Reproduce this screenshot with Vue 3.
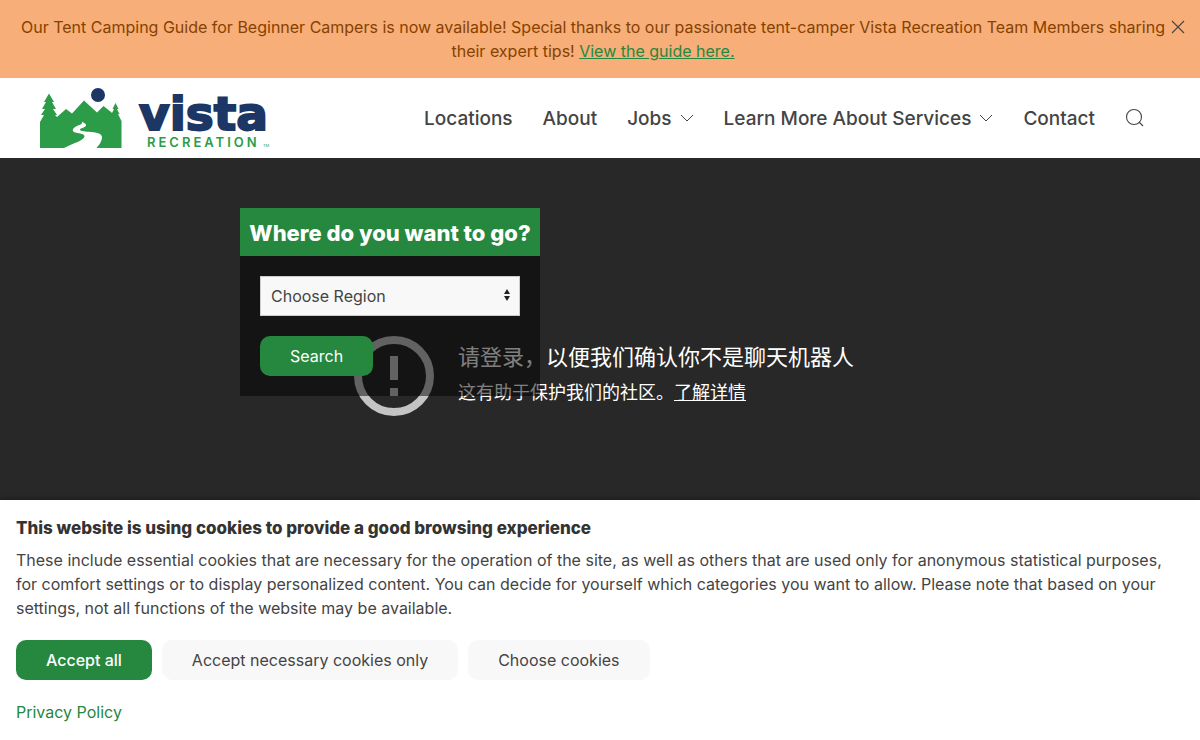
<script setup>
import { ref } from 'vue'

const bannerOpen = ref(true)
const region = ref('')
const links = [
  { label: 'Locations' },
  { label: 'About' },
  { label: 'Jobs', menu: true },
  { label: 'Learn More About Services', menu: true },
  { label: 'Contact' }
]
</script>

<template>
  <div class="page">
    <aside v-if="bannerOpen" class="banner">
      <p>
        Our Tent Camping Guide for Beginner Campers is now available! Special thanks to our passionate tent-camper Vista
        Recreation Team Members sharing their expert tips! <a href="#guide">View the guide here.</a>
      </p>
      <button type="button" class="close" aria-label="Close" @click="bannerOpen = false">
        <svg width="14" height="14" viewBox="0 0 14 14" fill="none" stroke="currentColor" stroke-width="1.1">
          <path d="M1 1 13 13M13 1 1 13" />
        </svg>
      </button>
    </aside>

    <header class="header">
      <a class="logo" href="#home" aria-label="Vista Recreation">
        <svg width="232" height="64" viewBox="0 0 232 64">
          <path
            fill="#2c9c48"
            d="M0 62V36L4 29H1L5 23H2L6 16H4L9 7.500 14 16H12L16 23H13L17 29H15L17 31 26 23 32 27.500 44 14.500 57 26.500 63.500 20 71 26 73 28H71.500L74 23H72.500L74 20 75.500 17 77 20 78.500 23H77L79.500 28H78L81.500 35V62Z"
          />
          <path
            fill="#fff"
            d="M42 35C42.500 37 42 38 39.500 39 35 40.500 32 43 33 45 34.500 48 44 46.500 44.500 50 45 54 34 57 24 62H56.500C59 59 61.500 56 62 52 62.500 47.500 57 46.500 51 46 46 45.500 40 45.500 40 43.500 40 42 46 42 46 39 46 37 42.500 37 42 35Z"
          />
          <circle cx="58" cy="9" r="7" fill="#1c3766" />
          <text class="wordmark" x="99" y="44">vista</text>
          <text class="tagline" x="107" y="61">RECREATION</text>
          <text class="trade" x="223" y="61">TM</text>
        </svg>
      </a>
      <nav class="nav" aria-label="Main">
        <a v-for="link in links" :key="link.label" href="#nav">
          {{ link.label }}
          <svg v-if="link.menu" width="14" height="14" viewBox="0 0 14 14" fill="none" stroke="currentColor">
            <path d="M1 3 7 9 13 3" />
          </svg>
        </a>
        <button type="button" class="search-toggle" aria-label="Open search">
          <svg width="20" height="20" viewBox="0 0 20 20" fill="none" stroke="currentColor" stroke-width="1.1">
            <circle cx="9" cy="9" r="7.500" />
            <path d="M14 14 18 18" />
          </svg>
        </button>
      </nav>
    </header>

    <main class="hero">
      <section class="notice">
        <svg width="80" height="80" viewBox="0 0 80 80">
          <circle cx="40" cy="40" r="36" fill="none" stroke="#c4c4c4" stroke-width="8" />
          <path fill="#c4c4c4" d="M36 20h8v24h-8zM36 52h8v8h-8z" />
        </svg>
        <div>
          <h2>请登录，以便我们确认你不是聊天机器人</h2>
          <p>这有助于保护我们的社区。<a href="#more">了解详情</a></p>
        </div>
      </section>
      <form class="finder" @submit.prevent>
        <h1>Where do you want to go?</h1>
        <div class="fields">
          <div class="select">
            <select v-model="region" aria-label="Region">
              <option value="">Choose Region</option>
            </select>
            <svg width="8" height="12" viewBox="0 0 8 12" fill="#222">
              <path d="M4 0 7 5H1zM1 7h6L4 12z" />
            </svg>
          </div>
          <button type="submit" class="btn primary">Search</button>
        </div>
      </form>
    </main>

    <section class="cookies" aria-label="Cookies">
      <h2>This website is using cookies to provide a good browsing experience</h2>
      <p>
        These include essential cookies that are necessary for the operation of the site, as well as others that are
        used only for anonymous statistical purposes, for comfort settings or to display personalized content. You can
        decide for yourself which categories you want to allow. Please note that based on your settings, not all
        functions of the website may be available.
      </p>
      <div class="actions">
        <button type="button" class="btn primary strong">Accept all</button>
        <button type="button" class="btn">Accept necessary cookies only</button>
        <button type="button" class="btn">Choose cookies</button>
      </div>
      <a href="#privacy">Privacy Policy</a>
    </section>
  </div>
</template>

<style>
body {
  margin: 0;
}
</style>

<style scoped>
* {
  box-sizing: border-box;
}
.page {
  display: flex;
  flex-direction: column;
  min-height: 100vh;
  background: #282828;
  color: #444;
  font: 16px/24px Inter, sans-serif;
}
h1,
h2,
p {
  margin: 0;
}
button {
  border: 0;
  cursor: pointer;
  font: inherit;
}
svg {
  display: block;
  flex: none;
}
.banner {
  display: flex;
  align-items: flex-start;
  padding: 15px;
  background: #f7ae78;
  color: #864200;
  text-align: center;
}
.banner p {
  flex: 1;
}
.banner a {
  color: #26873f;
}
.close {
  margin-top: 5px;
  padding: 0;
  background: none;
  color: #444;
}
.header {
  display: flex;
  align-items: center;
  justify-content: space-between;
  height: 80px;
  padding: 0 55px 0 40px;
  background: #fff;
}
.wordmark {
  fill: #1c3766;
  stroke: #1c3766;
  stroke-width: 2px;
  font: 700 47px "DejaVu Sans", sans-serif;
}
.tagline {
  fill: #2c9c48;
  font: 600 13px Inter, sans-serif;
  letter-spacing: 3px;
}
.trade {
  fill: #2c9c48;
  font: 4px Inter, sans-serif;
}
.nav {
  display: flex;
  align-items: center;
  gap: 30px;
  font-size: 19px;
  font-weight: 500;
}
.nav a {
  display: flex;
  align-items: center;
  gap: 8px;
  padding-top: 2px;
  color: #444;
  text-decoration: none;
  white-space: nowrap;
}
.search-toggle {
  padding: 0;
  background: none;
  color: #444;
}
.hero {
  display: grid;
  flex: 1;
  align-items: start;
}
.notice,
.finder {
  grid-area: 1 / 1;
}
.notice {
  display: flex;
  gap: 24px;
  justify-self: center;
  margin: 178px 0 0 8px;
  color: #fff;
  font-family: "Noto Sans CJK SC", sans-serif;
  white-space: nowrap;
}
.notice h2 {
  font-size: 22px;
  font-weight: 400;
  line-height: 38px;
}
.notice p {
  font-size: 18px;
  line-height: 34px;
}
.notice a {
  color: inherit;
}
.finder {
  width: 300px;
  margin: 50px 0 0 20%;
  background: rgba(0, 0, 0, 0.5);
}
.finder h1 {
  padding-top: 2px;
  background: #26873f;
  color: #fff;
  font-size: 22px;
  font-weight: 800;
  line-height: 46px;
  text-align: center;
  white-space: nowrap;
}
.fields {
  display: flex;
  flex-direction: column;
  align-items: flex-start;
  gap: 20px;
  padding: 20px;
}
.select {
  position: relative;
  width: 100%;
}
.select select {
  display: block;
  width: 100%;
  height: 40px;
  padding: 0 10px;
  border: 1px solid #ccc;
  border-radius: 0;
  appearance: none;
  background: #f8f8f8;
  color: #444;
  font: inherit;
}
.select svg {
  position: absolute;
  top: 13px;
  right: 9px;
  pointer-events: none;
}
.btn {
  height: 40px;
  padding: 0 30px;
  border-radius: 10px;
  background: #f8f8f8;
  color: #444;
}
.primary {
  background: #26873f;
  color: #fff;
}
.strong {
  font-weight: 500;
}
.cookies {
  padding: 16px;
  background: #fff;
  box-shadow: 0 0 6px rgba(0, 0, 0, 0.5);
}
.cookies h2 {
  margin-bottom: 8px;
  color: #333;
  font-size: 17px;
  font-weight: 800;
  line-height: 24px;
}
.actions {
  display: flex;
  flex-wrap: wrap;
  gap: 10px;
  margin: 20px 0;
}
.cookies a {
  color: #26873f;
  text-decoration: none;
}
</style>
